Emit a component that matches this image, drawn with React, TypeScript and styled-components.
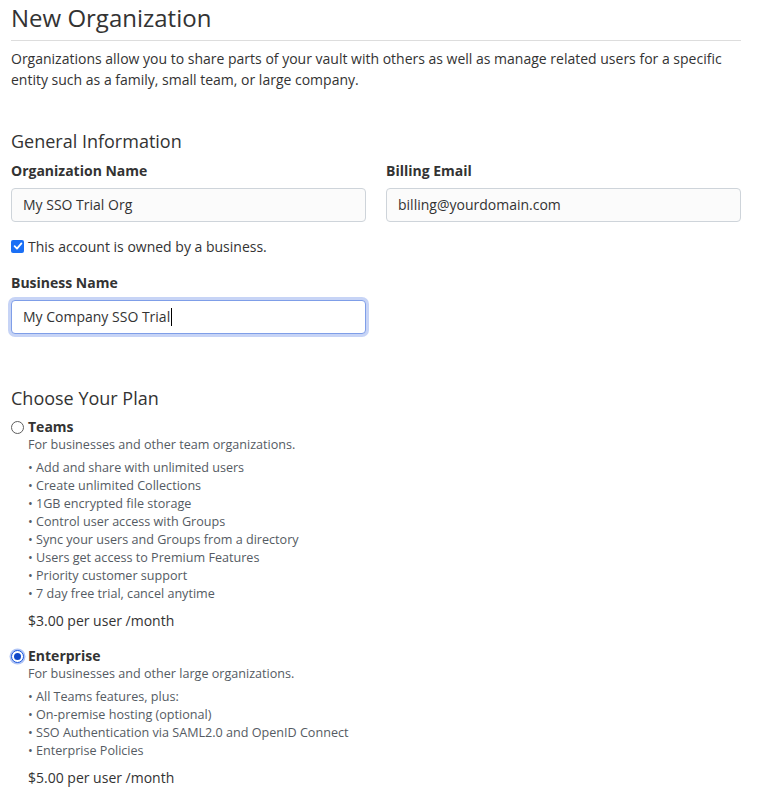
import React from "react";
import styled, { createGlobalStyle } from "styled-components";

const Global = createGlobalStyle`
  html, body { margin: 0; padding: 0; background: #fff; }
  body {
    font-family: "Open Sans", "Liberation Sans", sans-serif;
    font-size: 14px;
    line-height: 1.5;
    color: #333333;
  }
  * { box-sizing: border-box; }
`;

const Page = styled.div`
  width: 730px;
  margin-left: 11px;
  padding-top: 3px;
`;

const Title = styled.h1`
  margin: 0;
  font-size: 24px;
  font-weight: 400;
  line-height: 29px;
  color: #333333;
  padding-bottom: 8px;
  border-bottom: 1px solid #dddddd;
`;

const Intro = styled.p`
  margin: 7px 0 0;
  font-size: 14px;
  line-height: 21px;
`;

const SectionTitle = styled.h2<{ $top: number }>`
  margin: ${(p) => p.$top}px 0 0;
  font-size: 18px;
  font-weight: 400;
  line-height: 1.2;
  color: #333333;
`;

const Grid = styled.div`
  display: grid;
  grid-template-columns: 355px 355px;
  column-gap: 20px;
  margin-top: 7px;
`;

const Field = styled.div`
  display: flex;
  flex-direction: column;
`;

const Label = styled.label`
  font-weight: 700;
  font-size: 14px;
  line-height: 21px;
  margin-bottom: 7px;
  color: #333333;
`;

const Input = styled.div<{ $focused?: boolean }>`
  height: 34px;
  padding: 0 11px;
  display: flex;
  align-items: center;
  font-size: 14px;
  color: #333333;
  border-radius: 4px;
  border: 1px solid ${(p) => (p.$focused ? "#7f9ee8" : "#ced4da")};
  background: ${(p) => (p.$focused ? "#ffffff" : "#fbfbfb")};
  box-shadow: ${(p) => (p.$focused ? "0 0 0 3px rgba(94, 132, 230, 0.35)" : "none")};
`;

const Caret = styled.span`
  display: inline-block;
  width: 1px;
  height: 18px;
  background: #000;
  margin-left: 1px;
`;

const CheckRow = styled.div`
  display: flex;
  align-items: center;
  gap: 4px;
  margin-top: 14px;
  font-size: 14px;
  line-height: 21px;
`;

const CheckBox = styled.span`
  width: 13px;
  height: 13px;
  border-radius: 2px;
  background: #1a6ff5;
  display: inline-flex;
  align-items: center;
  justify-content: center;
`;

const BusinessField = styled(Field)`
  width: 355px;
  margin-top: 15px;
`;

const Plan = styled.div<{ $top: number }>`
  margin-top: ${(p) => p.$top}px;
`;

const PlanHead = styled.div`
  display: flex;
  align-items: center;
  gap: 4px;
  font-weight: 700;
  font-size: 14px;
  line-height: 18px;
`;

const Radio = styled.span<{ $checked?: boolean }>`
  width: 13px;
  height: 13px;
  border-radius: 50%;
  border: 1px solid ${(p) => (p.$checked ? "#1a56db" : "#5e5e5e")};
  background: #fff;
  display: inline-flex;
  align-items: center;
  justify-content: center;
  box-shadow: ${(p) => (p.$checked ? "0 0 0 1.5px rgba(60, 110, 230, 0.4)" : "none")};
  &::after {
    content: "";
    display: ${(p) => (p.$checked ? "block" : "none")};
    width: 7px;
    height: 7px;
    border-radius: 50%;
    background: #1048c8;
  }
`;

const PlanBody = styled.div`
  padding-left: 17px;
`;

const Desc = styled.div`
  font-size: 12.6px;
  line-height: 18px;
  color: #555b63;
`;

const Features = styled.ul`
  list-style: none;
  margin: 5px 0 0;
  padding: 0;
  font-size: 12.6px;
  line-height: 18px;
  color: #555b63;
`;

const Feature = styled.li`
  &::before {
    content: "• ";
  }
`;

const Price = styled.div`
  margin-top: 7px;
  font-size: 14px;
  line-height: 21px;
  color: #333333;
`;

const teams = [
  "Add and share with unlimited users",
  "Create unlimited Collections",
  "1GB encrypted file storage",
  "Control user access with Groups",
  "Sync your users and Groups from a directory",
  "Users get access to Premium Features",
  "Priority customer support",
  "7 day free trial, cancel anytime",
];

const enterprise = [
  "All Teams features, plus:",
  "On-premise hosting (optional)",
  "SSO Authentication via SAML2.0 and OpenID Connect",
  "Enterprise Policies",
];

export default function App() {
  return (
    <>
      <Global />
      <Page>
        <Title>New Organization</Title>
        <Intro>
          Organizations allow you to share parts of your vault with others as well as manage related users for a specific
          entity such as a family, small team, or large company.
        </Intro>

        <SectionTitle $top={41}>General Information</SectionTitle>
        <Grid>
          <Field>
            <Label>Organization Name</Label>
            <Input>My SSO Trial Org</Input>
          </Field>
          <Field>
            <Label>Billing Email</Label>
            <Input>billing@yourdomain.com</Input>
          </Field>
        </Grid>
        <CheckRow>
          <CheckBox>
            <svg width="10" height="10" viewBox="0 0 10 10">
              <path d="M1.6 5.2 L4 7.6 L8.4 2.4" fill="none" stroke="#fff" strokeWidth="1.8" strokeLinecap="round" strokeLinejoin="round" />
            </svg>
          </CheckBox>
          This account is owned by a business.
        </CheckRow>
        <BusinessField>
          <Label>Business Name</Label>
          <Input $focused>
            My Company SSO Trial
            <Caret />
          </Input>
        </BusinessField>

        <SectionTitle $top={54}>Choose Your Plan</SectionTitle>
        <Plan $top={9}>
          <PlanHead>
            <Radio />
            Teams
          </PlanHead>
          <PlanBody>
            <Desc>For businesses and other team organizations.</Desc>
            <Features>
              {teams.map((t) => (
                <Feature key={t}>{t}</Feature>
              ))}
            </Features>
            <Price>$3.00 per user /month</Price>
          </PlanBody>
        </Plan>
        <Plan $top={16}>
          <PlanHead>
            <Radio $checked />
            Enterprise
          </PlanHead>
          <PlanBody>
            <Desc>For businesses and other large organizations.</Desc>
            <Features>
              {enterprise.map((t) => (
                <Feature key={t}>{t}</Feature>
              ))}
            </Features>
            <Price>$5.00 per user /month</Price>
          </PlanBody>
        </Plan>
      </Page>
    </>
  );
}
